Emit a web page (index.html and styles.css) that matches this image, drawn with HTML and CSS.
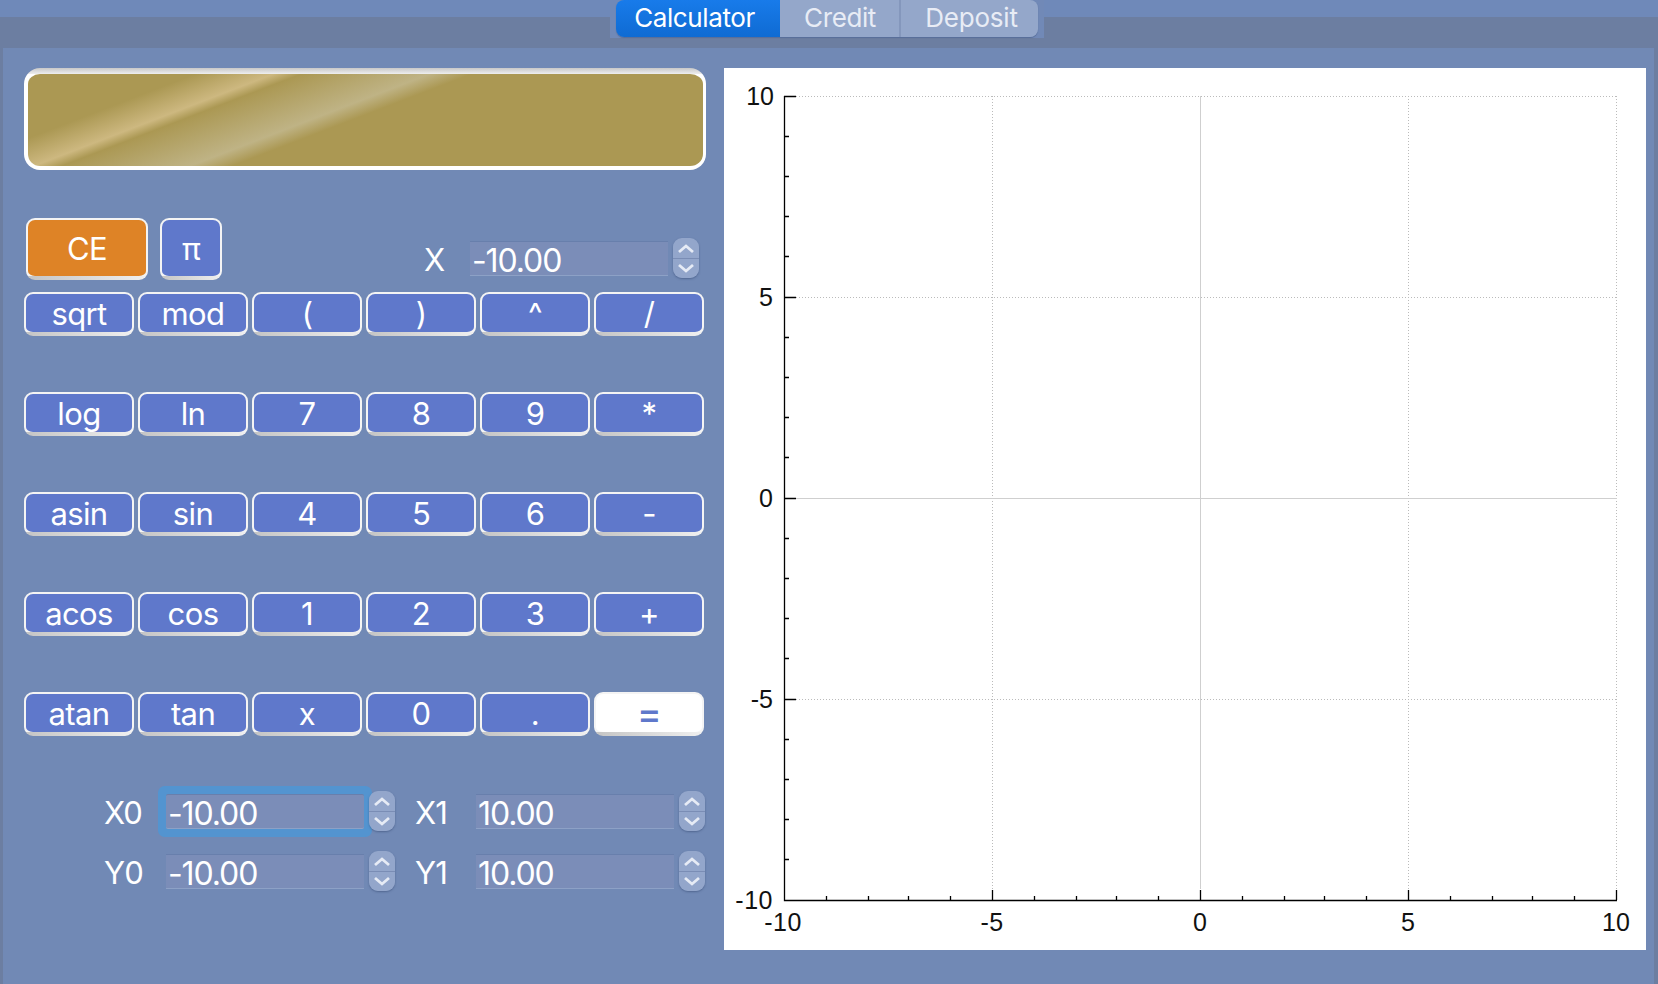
FILE: index.html
```html
<!DOCTYPE html>
<html lang="en">
<head>
    <meta charset="UTF-8">
    <title>Calculator</title>
    <link rel="stylesheet" href="styles.css">
</head>
<body>
    <header class="header">
        <nav class="tabs">
            <div class="tab-group">
                <a class="tab tab-active">Calculator</a>
                <a class="tab tab-credit">Credit</a>
                <a class="tab tab-deposit">Deposit</a>
            </div>
        </nav>
    </header>
    <main class="pane">
        <section class="calc">
            <div class="display"></div>

            <div class="top-row">
                <button class="key key-ce">CE</button>
                <button class="key key-pi">π</button>
                <label class="x-label">X</label>
                <input class="field x-field" type="text" value="-10.00">
                <div class="stepper">
                    <svg width="26" height="40" viewBox="0 0 26 40"><path d="M6 14l7-6 7 6M6 27l7 6 7-6"/></svg>
                </div>
            </div>

            <div class="keys">
                <button class="key">sqrt</button>
                <button class="key">mod</button>
                <button class="key">(</button>
                <button class="key">)</button>
                <button class="key">^</button>
                <button class="key">/</button>

                <button class="key">log</button>
                <button class="key">ln</button>
                <button class="key">7</button>
                <button class="key">8</button>
                <button class="key">9</button>
                <button class="key">*</button>

                <button class="key">asin</button>
                <button class="key">sin</button>
                <button class="key">4</button>
                <button class="key">5</button>
                <button class="key">6</button>
                <button class="key">-</button>

                <button class="key">acos</button>
                <button class="key">cos</button>
                <button class="key">1</button>
                <button class="key">2</button>
                <button class="key">3</button>
                <button class="key">+</button>

                <button class="key">atan</button>
                <button class="key">tan</button>
                <button class="key">x</button>
                <button class="key">0</button>
                <button class="key">.</button>
                <button class="key key-equals">=</button>
            </div>

            <div class="ranges">
                <label class="range-label">X0</label>
                <input class="field field-focus" type="text" value="-10.00">
                <div class="stepper">
                    <svg width="26" height="40" viewBox="0 0 26 40"><path d="M6 14l7-6 7 6M6 27l7 6 7-6"/></svg>
                </div>
                <label class="range-label range-label-right">X1</label>
                <input class="field" type="text" value="10.00">
                <div class="stepper">
                    <svg width="26" height="40" viewBox="0 0 26 40"><path d="M6 14l7-6 7 6M6 27l7 6 7-6"/></svg>
                </div>

                <label class="range-label">Y0</label>
                <input class="field" type="text" value="-10.00">
                <div class="stepper">
                    <svg width="26" height="40" viewBox="0 0 26 40"><path d="M6 14l7-6 7 6M6 27l7 6 7-6"/></svg>
                </div>
                <label class="range-label range-label-right">Y1</label>
                <input class="field" type="text" value="10.00">
                <div class="stepper">
                    <svg width="26" height="40" viewBox="0 0 26 40"><path d="M6 14l7-6 7 6M6 27l7 6 7-6"/></svg>
                </div>
            </div>
        </section>

        <section class="plot">
            <svg class="chart" width="922" height="882" viewBox="0 0 922 882">
                <!-- grid -->
                <path class="grid" d="M72 28.5H893M72 229.5H893M72 631.5H893"/>
                <path class="grid" d="M268.5 28V821M684.5 28V821M892.5 28V821"/>
                <path class="zero" d="M72 430.5H893M476.5 28V821"/>
                <!-- axes -->
                <path class="axis" d="M60.5 28V832.5H893"/>
                <!-- major ticks -->
                <path class="axis" d="M60 28.5H72M60 229.5H72M60 430.5H72M60 631.5H72"/>
                <path class="axis" d="M268.5 822V832M476.5 822V832M684.5 822V832M892.5 822V832"/>
                <!-- minor ticks -->
                <path class="axis" d="M60 68.5H65M60 108.5H65M60 148.5H65M60 188.5H65M60 269.5H65M60 309.5H65M60 349.5H65M60 389.5H65M60 470.5H65M60 510.5H65M60 550.5H65M60 590.5H65M60 671.5H65M60 711.5H65M60 751.5H65M60 791.5H65"/>
                <path class="axis" d="M102.5 828V832M144.5 828V832M184.5 828V832M226.5 828V832M310.5 828V832M352.5 828V832M392.5 828V832M434.5 828V832M518.5 828V832M560.5 828V832M600.5 828V832M642.5 828V832M726.5 828V832M768.5 828V832M808.5 828V832M850.5 828V832"/>
                <!-- y labels -->
                <text class="label label-y" x="50" y="37">10</text>
                <text class="label label-y" x="49" y="238">5</text>
                <text class="label label-y" x="49" y="439">0</text>
                <text class="label label-y" x="49" y="640">-5</text>
                <text class="label label-y label-neg" x="49" y="841">-10</text>
                <!-- x labels -->
                <text class="label label-x label-neg" x="59" y="863">-10</text>
                <text class="label label-x label-neg" x="268" y="863">-5</text>
                <text class="label label-x" x="476" y="863">0</text>
                <text class="label label-x" x="684" y="863">5</text>
                <text class="label label-x" x="892" y="863">10</text>
            </svg>
        </section>
    </main>
</body>
</html>
```

FILE: styles.css
```css
* {
    box-sizing: border-box;
}
body {
    margin: 0;
    height: 984px;
    overflow: hidden;
    background-color: #6c7ea1;
    font-family: Inter, "Liberation Sans", sans-serif;
    display: flex;
    flex-direction: column;
}

/* tab bar */
.header {
    height: 48px;
    background: linear-gradient(#6f89b9 17px, #6c7ea1 17px);
}
.tabs {
    width: 434px;
    height: 38px;
    margin-left: 610px;
    padding: 0 6px 1px;
    background-color: #7189b7;
}
.tab-group {
    display: flex;
    height: 37px;
    border-radius: 8px;
    overflow: hidden;
    box-shadow: 0 1px 1px rgba(60, 80, 120, 0.5);
}
.tab {
    display: flex;
    align-items: center;
    justify-content: center;
    padding-bottom: 2px;
    font-size: 26px;
    letter-spacing: -0.4px;
    color: #e8ecf5;
    background-color: #94a7ca;
}
.tab-active {
    width: 164px;
    padding-right: 7px;
    color: #fff;
    background: linear-gradient(#187bea, #0f6bd3);
}
.tab-credit {
    width: 121px;
    padding-left: 1px;
    border-right: 2px solid #8497bc;
}
.tab-deposit {
    width: 137px;
    padding-left: 4px;
    letter-spacing: -0.2px;
}

/* main pane */
.pane {
    flex: 1;
    margin: 0 4px 0 3px;
    padding: 20px 8px 0 21px;
    background-color: #7189b5;
    display: grid;
    grid-template-columns: 682px 922px;
    column-gap: 18px;
    align-items: start;
}

.display {
    height: 102px;
    border-style: solid;
    border-width: 6px 3px 4px 4px;
    border-color: transparent;
    border-radius: 16px;
    background:
        linear-gradient(159deg, #ab9853 60px, #cdb880 88px, #ab9853 98px, #bfb385 144px, #ab9853 159px) padding-box,
        linear-gradient(#c8c8c8, #eeeeee 6px, #ffffff 6px) border-box;
}

.top-row {
    display: flex;
    margin: 48px 0 0 2px;
    height: 62px;
    align-items: flex-start;
}
.x-label {
    margin: 24px 26px 0 auto;
    width: 20px;
    font-size: 31px;
    line-height: 36px;
    color: #fff;
}

.key {
    --fill: #5f78cb;
    height: 44px;
    padding: 1px 0 0;
    border: solid transparent;
    border-width: 2px 2px 4px;
    border-radius: 9px;
    font-family: inherit;
    font-size: 31px;
    line-height: 34px;
    letter-spacing: -0.6px;
    color: #fff;
    background:
        linear-gradient(var(--fill), var(--fill)) padding-box,
        linear-gradient(#f4f4f4 calc(100% - 4px), transparent 0) border-box,
        linear-gradient(90deg, #c4c4c4, #f0f0f0) border-box;
}
.key-ce {
    --fill: #de8326;
    width: 122px;
    height: 62px;
}
.key-pi {
    width: 62px;
    height: 62px;
    margin-left: 12px;
}
.key-equals {
    --fill: #ffffff;
    font-size: 37px;
    font-weight: 500;
    color: #5f78cb;
}

.keys {
    display: grid;
    grid-template-columns: repeat(6, 110px);
    column-gap: 4px;
    row-gap: 56px;
    margin-top: 12px;
}

/* spin boxes */
.field {
    width: 198px;
    height: 35px;
    padding: 4px 2px 0;
    border: none;
    border-top: 1px solid #687fac;
    border-bottom: 1px solid #8da1c6;
    border-radius: 0;
    outline: none;
    font-family: inherit;
    font-size: 32px;
    letter-spacing: -1.1px;
    color: #fff;
    background-color: #7b8db8;
}
.x-field {
    margin-top: 23px;
}
.field-focus {
    box-shadow: 0 0 0 8px #5394d0;
    border-radius: 2px;
}
.stepper {
    width: 26px;
    height: 40px;
    margin-left: 5px;
    border-radius: 9px;
    background: linear-gradient(#93a6cb 49%, #7a8db5 49%, #7a8db5 52%, #93a6cb 52%);
    box-shadow: 0 1px 2px rgba(50, 70, 110, 0.5);
}
.top-row .stepper {
    margin: 20px 7px 0 5px;
}
.stepper svg {
    display: block;
}
.stepper path {
    fill: none;
    stroke: #e6ebf5;
    stroke-width: 2.8;
}

.ranges {
    display: grid;
    grid-template-columns: 142px 198px 31px 81px 198px 31px;
    row-gap: 20px;
    align-items: center;
    margin-top: 55px;
}
.range-label {
    padding: 3px 0 0 80px;
    font-size: 31px;
    letter-spacing: -0.8px;
    color: #fff;
}
.range-label-right {
    padding-left: 20px;
}

/* plot */
.plot {
    height: 882px;
    background-color: #fff;
}
.chart {
    display: block;
}
.grid {
    fill: none;
    stroke: #bbbbbb;
    stroke-dasharray: 1 2;
}
.zero {
    fill: none;
    stroke: #cfcfcf;
}
.axis {
    fill: none;
    stroke: #000;
    stroke-width: 1.3;
}
.label {
    font-family: "Liberation Sans", Arial, sans-serif;
    font-size: 25px;
    fill: #111;
}
.label-y {
    text-anchor: end;
}
.label-x {
    text-anchor: middle;
}
.label-neg {
    letter-spacing: 0.5px;
}
```
